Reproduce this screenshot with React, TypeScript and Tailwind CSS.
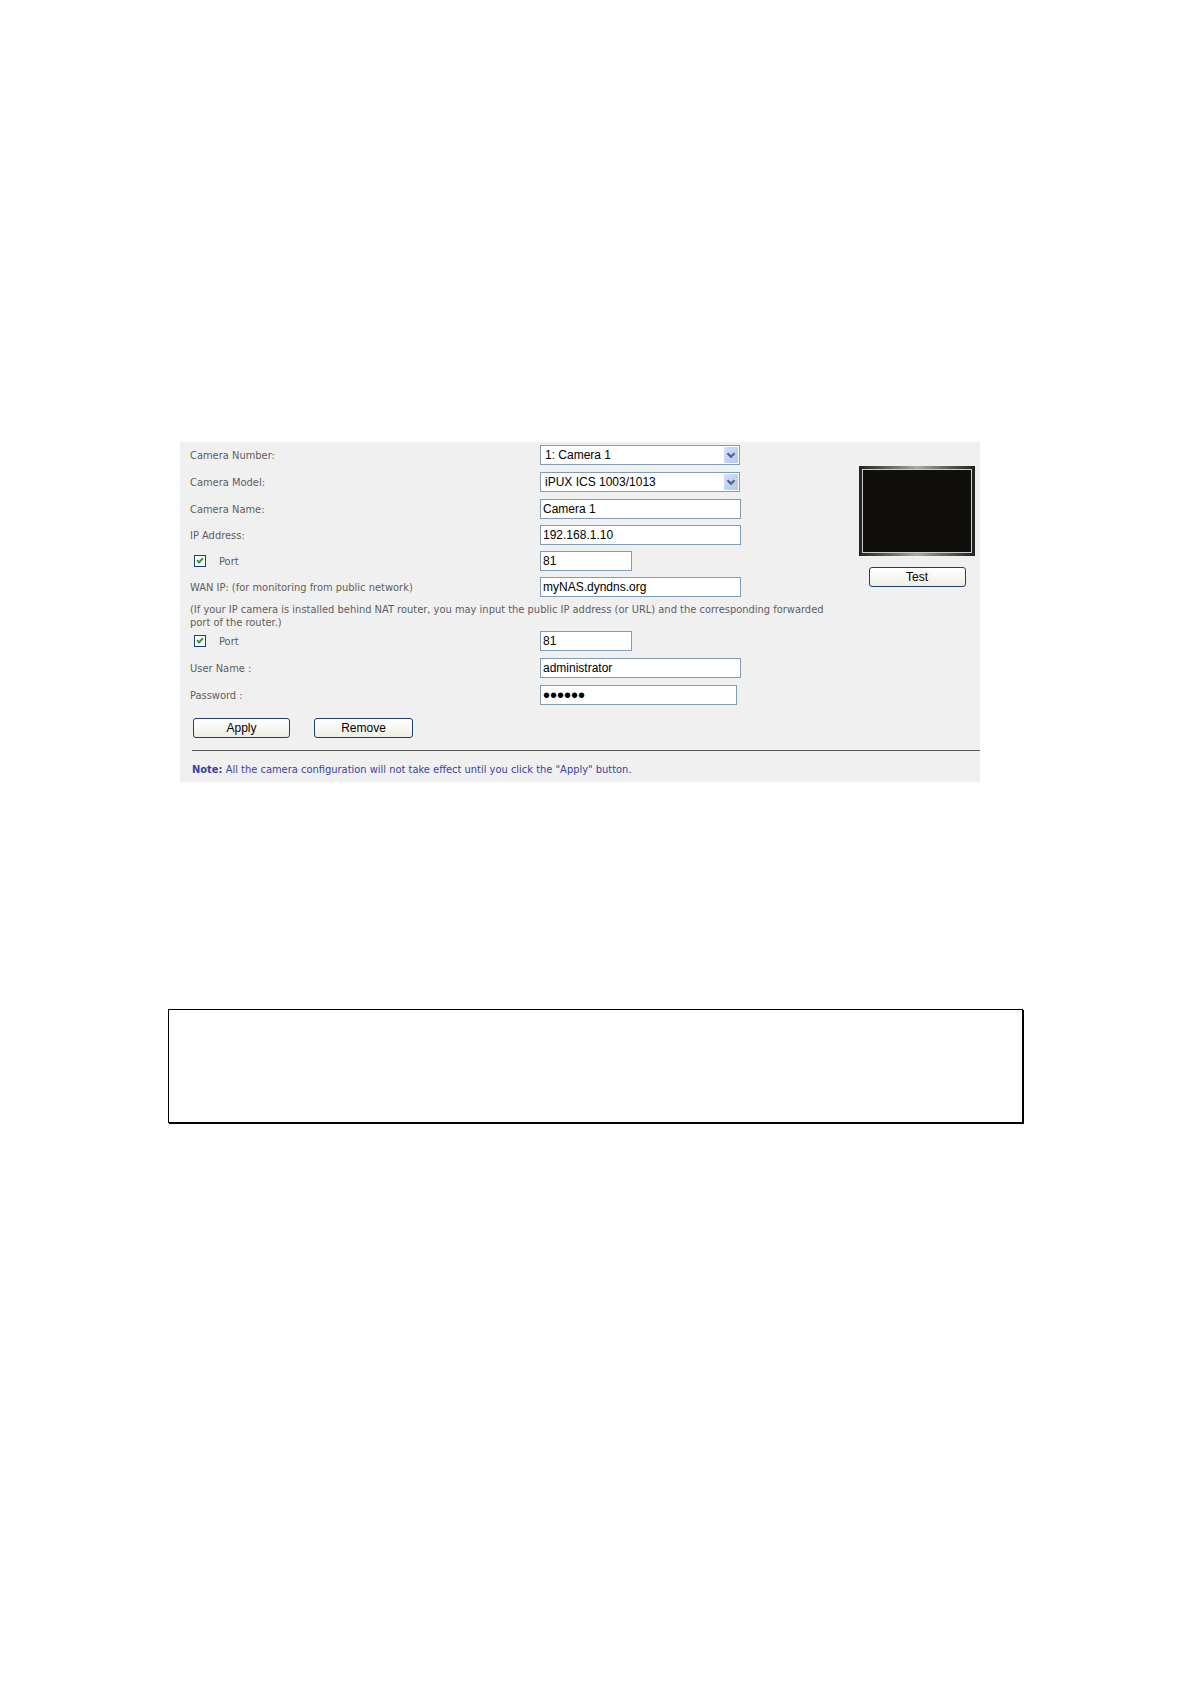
import { useState, type ReactNode } from "react";

const textFont = "font-['DejaVu_Sans_Condensed','DejaVu_Sans',sans-serif]";
const fieldFont = "font-['Liberation_Sans',Arial,sans-serif]";
const fieldBox = `h-5 border border-[#7f9db9] bg-white text-black outline-none ${fieldFont}`;

interface RowProps {
  id: string;
  label: ReactNode;
  children: ReactNode;
}

const Row = ({ id, label, children }: RowProps) => (
  <div className="flex h-5 items-center">
    <label htmlFor={id} className="w-[350px] shrink-0 whitespace-nowrap">
      {label}
    </label>
    {children}
  </div>
);

interface SelectProps {
  id: string;
  options: string[];
}

const Select = ({ id, options }: SelectProps) => (
  <div className="relative w-[200px]">
    <select id={id} className={`block w-full appearance-none pr-5 pl-1 text-xs ${fieldBox}`}>
      {options.map((option) => (
        <option key={option}>{option}</option>
      ))}
    </select>
    <svg
      className="pointer-events-none absolute top-0.5 right-0.5 h-4 w-3.5"
      viewBox="0 0 14 16"
      aria-hidden="true"
    >
      <defs>
        <linearGradient id={`${id}-arrow`} x1="0" y1="0" x2="1" y2="1">
          <stop offset="0" stopColor="#d3e0fb" />
          <stop offset="1" stopColor="#b3c6ee" />
        </linearGradient>
      </defs>
      <rect width="14" height="16" rx="1" fill={`url(#${id}-arrow)`} />
      <path d="M3.5 6.2 7 9.7l3.5-3.5" fill="none" stroke="#4d6185" strokeWidth="2.2" />
    </svg>
  </div>
);

interface PortRowProps {
  id: string;
}

const PortRow = ({ id }: PortRowProps) => {
  const [enabled, setEnabled] = useState(true);

  return (
    <div className="flex h-5 items-center">
      <div className="flex w-[350px] shrink-0 items-center gap-[13px] pl-1">
        <div className="relative size-3">
          <input
            id={`${id}-enabled`}
            type="checkbox"
            checked={enabled}
            onChange={(e) => setEnabled(e.target.checked)}
            className="block size-3 appearance-none border border-[#1c3f80] bg-white"
          />
          {enabled && (
            <svg
              className="pointer-events-none absolute inset-0 size-3"
              viewBox="0 0 12 12"
              aria-hidden="true"
            >
              <path d="m3 5.2 2 2.3 4-4.3" fill="none" stroke="#2f9a3c" strokeWidth="2" />
            </svg>
          )}
        </div>
        <label htmlFor={`${id}-enabled`}>Port</label>
      </div>
      <input
        id={id}
        aria-label="Port number"
        defaultValue="81"
        className={`w-[92px] px-0.5 text-xs ${fieldBox}`}
      />
    </div>
  );
};

interface ButtonProps {
  children: ReactNode;
  wide?: boolean;
}

const Button = ({ children, wide }: ButtonProps) => (
  <button
    type="button"
    className={`h-5 rounded-[3px] border border-[#1f3f73] bg-linear-to-b from-white to-[#eeeee6] text-xs text-black ${
      wide ? "w-[99px]" : "w-[97px]"
    } ${fieldFont}`}
  >
    {children}
  </button>
);

const CameraPanel = () => (
  <form className={`bg-[#f0f0f0] pt-[3px] pb-1.5 text-[11px] leading-[13px] text-[#5e5e5e] ${textFont}`}>
    <div className="flex items-start justify-between pr-[5px] pl-2.5">
      <div className="min-w-0">
        <div className="flex flex-col gap-[7px]">
          <Row id="number" label="Camera Number:">
            <Select id="number" options={["1: Camera 1"]} />
          </Row>
          <Row id="model" label="Camera Model:">
            <Select id="model" options={["iPUX ICS 1003/1013"]} />
          </Row>
        </div>
        <div className="mt-[7px] flex flex-col gap-1.5">
          <Row id="name" label="Camera Name:">
            <input id="name" defaultValue="Camera 1" className={`w-[201px] px-0.5 text-xs ${fieldBox}`} />
          </Row>
          <Row id="address" label="IP Address:">
            <input id="address" defaultValue="192.168.1.10" className={`w-[201px] px-0.5 text-xs ${fieldBox}`} />
          </Row>
          <PortRow id="port" />
          <Row id="wan" label="WAN IP: (for monitoring from public network)">
            <input id="wan" defaultValue="myNAS.dyndns.org" className={`w-[201px] px-0.5 text-xs ${fieldBox}`} />
          </Row>
        </div>
        <p className="mt-1.5 mb-0.5 max-w-[645px]">
          (If your IP camera is installed behind NAT router, you may input the public IP address (or URL) and the
          corresponding forwarded port of the router.)
        </p>
        <div className="flex flex-col gap-[7px]">
          <PortRow id="wan-port" />
          <Row id="user" label="User Name :">
            <input id="user" defaultValue="administrator" className={`w-[201px] px-0.5 text-xs ${fieldBox}`} />
          </Row>
          <Row id="password" label="Password :">
            <input
              id="password"
              type="password"
              defaultValue="secret"
              className={`w-[197px] px-0.5 text-[20px] ${fieldBox}`}
            />
          </Row>
        </div>
      </div>
      <div className="mt-[21px] flex shrink-0 flex-col items-center gap-[11px]">
        <div className="h-[90px] w-[116px] bg-linear-to-r from-[#222] via-[#aaa] to-[#222] p-[3px]">
          <div className="h-full border border-[#ccc] bg-[#100f0c]" />
        </div>
        <Button>Test</Button>
      </div>
    </div>
    <div className="mt-[13px] flex gap-6 pl-[13px]">
      <Button>Apply</Button>
      <Button wide>Remove</Button>
    </div>
    <hr className="mt-3 ml-3 border-[#5a5a5a]" />
    <p className="mt-3 ml-3 text-[#3a3fa5]">
      <b>Note:</b> All the camera configuration will not take effect until you click the "Apply" button.
    </p>
  </form>
);

const App = () => (
  <main className="min-h-screen bg-white pt-[442px] pr-[167px] pb-20 pl-[168px]">
    <div className="mr-[43px] ml-3">
      <CameraPanel />
    </div>
    <div className="mt-[227px] h-[114px] border border-black shadow-[1px_1px_0_#000]" />
  </main>
);

export default App;
